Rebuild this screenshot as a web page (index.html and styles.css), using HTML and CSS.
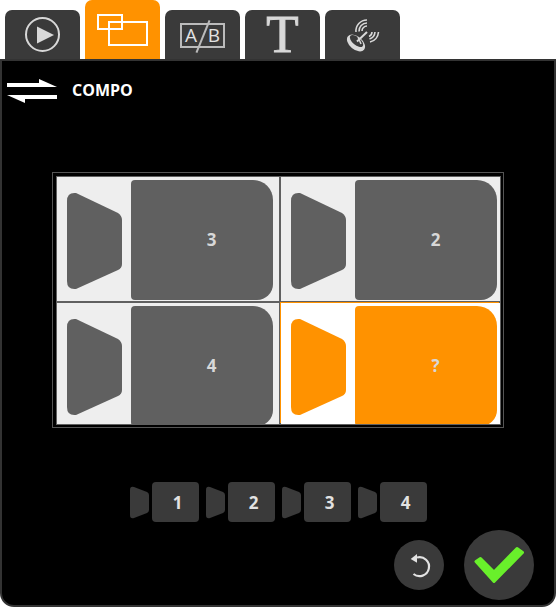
FILE: index.html
```html
<!DOCTYPE html>
<html lang="en">
<head>
<meta charset="utf-8">
<title>Compo</title>
<link rel="stylesheet" href="styles.css">
</head>
<body>
<nav class="tabs">
  <div class="tab">
    <svg width="35" height="35" viewBox="0 0 35 35"><circle cx="17.500" cy="17.500" r="16.500" fill="none" stroke="#d8d8d8" stroke-width="2"/><path d="M12 9.500 L29 18 L12 26.500 Z" fill="#d8d8d8"/></svg>
  </div>
  <div class="tab tab-active">
    <svg width="51" height="32" viewBox="0 0 51 32"><rect x="1" y="1" width="24" height="14" fill="none" stroke="#fff" stroke-width="2"/><rect x="12" y="8" width="38" height="23" fill="none" stroke="#fff" stroke-width="2"/></svg>
  </div>
  <div class="tab">
    <div class="ab"><span>A</span><i class="slash"></i><span>B</span></div>
  </div>
  <div class="tab tab-t"><span>T</span></div>
  <div class="tab">
    <svg width="36" height="36" viewBox="0 0 36 36" fill="none" stroke="#d8d8d8">
      <ellipse cx="11" cy="26" rx="10.500" ry="6.500" transform="rotate(40 11 26)" fill="#d8d8d8" stroke="none"/>
      <ellipse cx="11.500" cy="24" rx="8" ry="4" transform="rotate(40 11.500 24)" fill="#3a3a3a" stroke="none"/>
      <path d="M12 24.500 L22 15" stroke-width="2"/>
      <path d="M13 20 L16 27" stroke-width="1.500"/>
      <path d="M11 15 A11 11 0 0 1 22 3 M14 14.500 A8 8 0 0 1 22 6 M17 14 A5 5 0 0 1 22 9" stroke-width="1.600"/>
      <path d="M33.500 15 A11 11 0 0 1 25 25 M30 15 A8 8 0 0 1 24.500 22 M27 15 A5 5 0 0 1 24 19.500" stroke-width="1.600"/>
    </svg>
  </div>
</nav>
<main class="panel">
  <header class="head">
    <svg class="swap" width="50" height="24" viewBox="0 0 50 24"><path d="M0 4 H32 V0 L50 8 H0 Z M0 16 H50 V20 H18 V24 Z" fill="#fff"/></svg>
    <h1 class="title">COMPO</h1>
  </header>
  <section class="frame">
    <div class="grid">
      <div class="cell"><svg class="cam" width="55" height="98" viewBox="0 0 55 98"><path d="M0 9 Q0 0 9 1 L51 21 Q55 24 55 28 V72 Q55 76 51 78 L9 97 Q0 98 0 89 Z" fill="#606060"/></svg><div class="card">3</div></div>
      <div class="cell"><svg class="cam" width="55" height="98" viewBox="0 0 55 98"><path d="M0 9 Q0 0 9 1 L51 21 Q55 24 55 28 V72 Q55 76 51 78 L9 97 Q0 98 0 89 Z" fill="#606060"/></svg><div class="card">2</div></div>
      <div class="cell"><svg class="cam" width="55" height="98" viewBox="0 0 55 98"><path d="M0 9 Q0 0 9 1 L51 21 Q55 24 55 28 V72 Q55 76 51 78 L9 97 Q0 98 0 89 Z" fill="#606060"/></svg><div class="card">4</div></div>
      <div class="cell cell-active"><svg class="cam" width="55" height="98" viewBox="0 0 55 98"><path d="M0 9 Q0 0 9 1 L51 21 Q55 24 55 28 V72 Q55 76 51 78 L9 97 Q0 98 0 89 Z" fill="#ff9200"/></svg><div class="card">?</div></div>
    </div>
  </section>
  <div class="chips">
    <div class="chip"><svg width="19" height="33" viewBox="0 0 19 33"><path d="M0 4 Q0 0 4 1 L17 6 Q19 7 19 9 V24 Q19 26 17 27 L4 32 Q0 33 0 29 Z" fill="#3a3a3a"/></svg><div class="key">1</div></div>
    <div class="chip"><svg width="19" height="33" viewBox="0 0 19 33"><path d="M0 4 Q0 0 4 1 L17 6 Q19 7 19 9 V24 Q19 26 17 27 L4 32 Q0 33 0 29 Z" fill="#3a3a3a"/></svg><div class="key">2</div></div>
    <div class="chip"><svg width="19" height="33" viewBox="0 0 19 33"><path d="M0 4 Q0 0 4 1 L17 6 Q19 7 19 9 V24 Q19 26 17 27 L4 32 Q0 33 0 29 Z" fill="#3a3a3a"/></svg><div class="key">3</div></div>
    <div class="chip"><svg width="19" height="33" viewBox="0 0 19 33"><path d="M0 4 Q0 0 4 1 L17 6 Q19 7 19 9 V24 Q19 26 17 27 L4 32 Q0 33 0 29 Z" fill="#3a3a3a"/></svg><div class="key">4</div></div>
  </div>
  <div class="actions">
    <button class="round round-small" type="button" aria-label="Undo">
      <svg width="50" height="50" viewBox="0 0 50 50"><path d="M23 17.500 A9.500 9.500 0 1 1 19.500 34" fill="none" stroke="#e2e2e2" stroke-width="2.200"/><path d="M16.700 19 L23 14 V22.700 Z" fill="#e2e2e2"/></svg>
    </button>
    <button class="round round-big" type="button" aria-label="Confirm">
      <svg width="70" height="70" viewBox="0 0 70 70"><path d="M12 31.500 L16.500 28.500 L30 42 L53 18.500 L58.500 22.500 L30 51.500 Z" fill="#69f02b" stroke="#69f02b" stroke-width="3" stroke-linejoin="round"/></svg>
    </button>
  </div>
</main>
</body>
</html>
```

FILE: styles.css
```css
* { box-sizing: border-box; }
html, body { margin: 0; padding: 0; }
body {
  width: 556px;
  height: 607px;
  background: #fff;
  overflow: hidden;
  font-family: "Open Sans", "Noto Sans", sans-serif;
  display: flex;
  flex-direction: column;
}
.tabs {
  height: 59px;
  flex: none;
  display: flex;
  align-items: flex-end;
  gap: 5px;
  padding-left: 5px;
}
.tab {
  width: 75px;
  height: 49px;
  background: #3a3a3a;
  border-radius: 7px 7px 0 0;
  display: flex;
  align-items: center;
  justify-content: center;
}
.tab-active {
  height: 59px;
  background: #ff9200;
}
.ab {
  position: relative;
  width: 45px;
  height: 25px;
  margin-top: 2px;
  border: 2px solid #bbb;
  display: flex;
  align-items: center;
  justify-content: space-between;
  padding: 0 3px;
  font-size: 19px;
  line-height: 1;
  color: #e2e2e2;
}
.slash {
  position: absolute;
  left: 19.500px;
  top: -6px;
  width: 2px;
  height: 35px;
  background: #bbb;
  transform: rotate(22deg);
}
.tab-t {
  font-family: "Liberation Serif", serif;
  font-size: 53px;
  font-weight: 400;
  color: #d8d8d8;
  line-height: 49px;
}
.tab-t span { display: block; -webkit-text-stroke: 1px #d8d8d8; }
.panel {
  flex: 1;
  background: #000;
  border: 2px solid #333;
  border-radius: 0 0 14px 14px;
  display: flex;
  flex-direction: column;
}
.head {
  height: 58px;
  flex: none;
  display: flex;
  align-items: center;
  gap: 15px;
  padding-left: 5px;
}
.swap { flex: none; margin-top: 2px; }
.title {
  margin: 0;
  font-size: 16px;
  font-weight: 700;
  color: #fff;
  line-height: 20px;
}
.frame {
  width: 452px;
  height: 256px;
  margin: 53px 0 0 50px;
  border: 1px solid #555;
  padding: 3px;
  flex: none;
}
.grid {
  width: 445px;
  height: 249px;
  border: 1px solid #606060;
  display: grid;
  grid-template-columns: 222px 1fr;
  grid-template-rows: 124px 1fr;
  gap: 2px;
  background: #606060;
}
.cell {
  background: #eee;
  display: flex;
  align-items: flex-start;
  padding-left: 10px;
  overflow: hidden;
}
.cell-active {
  background: #fff;
  position: relative;
  box-shadow: -1px -1px 0 0 #ff9200;
}
.cam { flex: none; margin-top: 15px; }
.card {
  margin: 3px 0 0 9px;
  flex: none;
  width: 142px;
  height: 120px;
  padding: 0 0 2px 19px;
  background: #606060;
  color: #d8d8d8;
  border-radius: 4px 20px 16px 4px;
  display: flex;
  align-items: center;
  justify-content: center;
  font-size: 17px;
  font-weight: 700;
  line-height: 1;
}
.cell-active .card { background: #ff9200; }
.chips {
  margin: 54px 0 0 128px;
  display: flex;
  flex: none;
}
.chip { width: 76px; display: flex; align-items: center; gap: 3px; flex: none; }
.chip svg { flex: none; }
.key {
  width: 47px;
  height: 40px;
  padding-left: 4px;
  background: #3a3a3a;
  border-radius: 4px;
  color: #e2e2e2;
  font-size: 17px;
  font-weight: 700;
  display: flex;
  align-items: center;
  justify-content: center;
}
.actions {
  margin-top: 8px;
  padding-left: 392px;
  display: flex;
  align-items: center;
  gap: 20px;
}
.round {
  border: 0;
  padding: 0;
  background: #3a3a3a;
  border-radius: 50%;
  display: flex;
  align-items: center;
  justify-content: center;
  flex: none;
}
.round-small { width: 50px; height: 50px; }
.round-big { width: 70px; height: 70px; }
```
